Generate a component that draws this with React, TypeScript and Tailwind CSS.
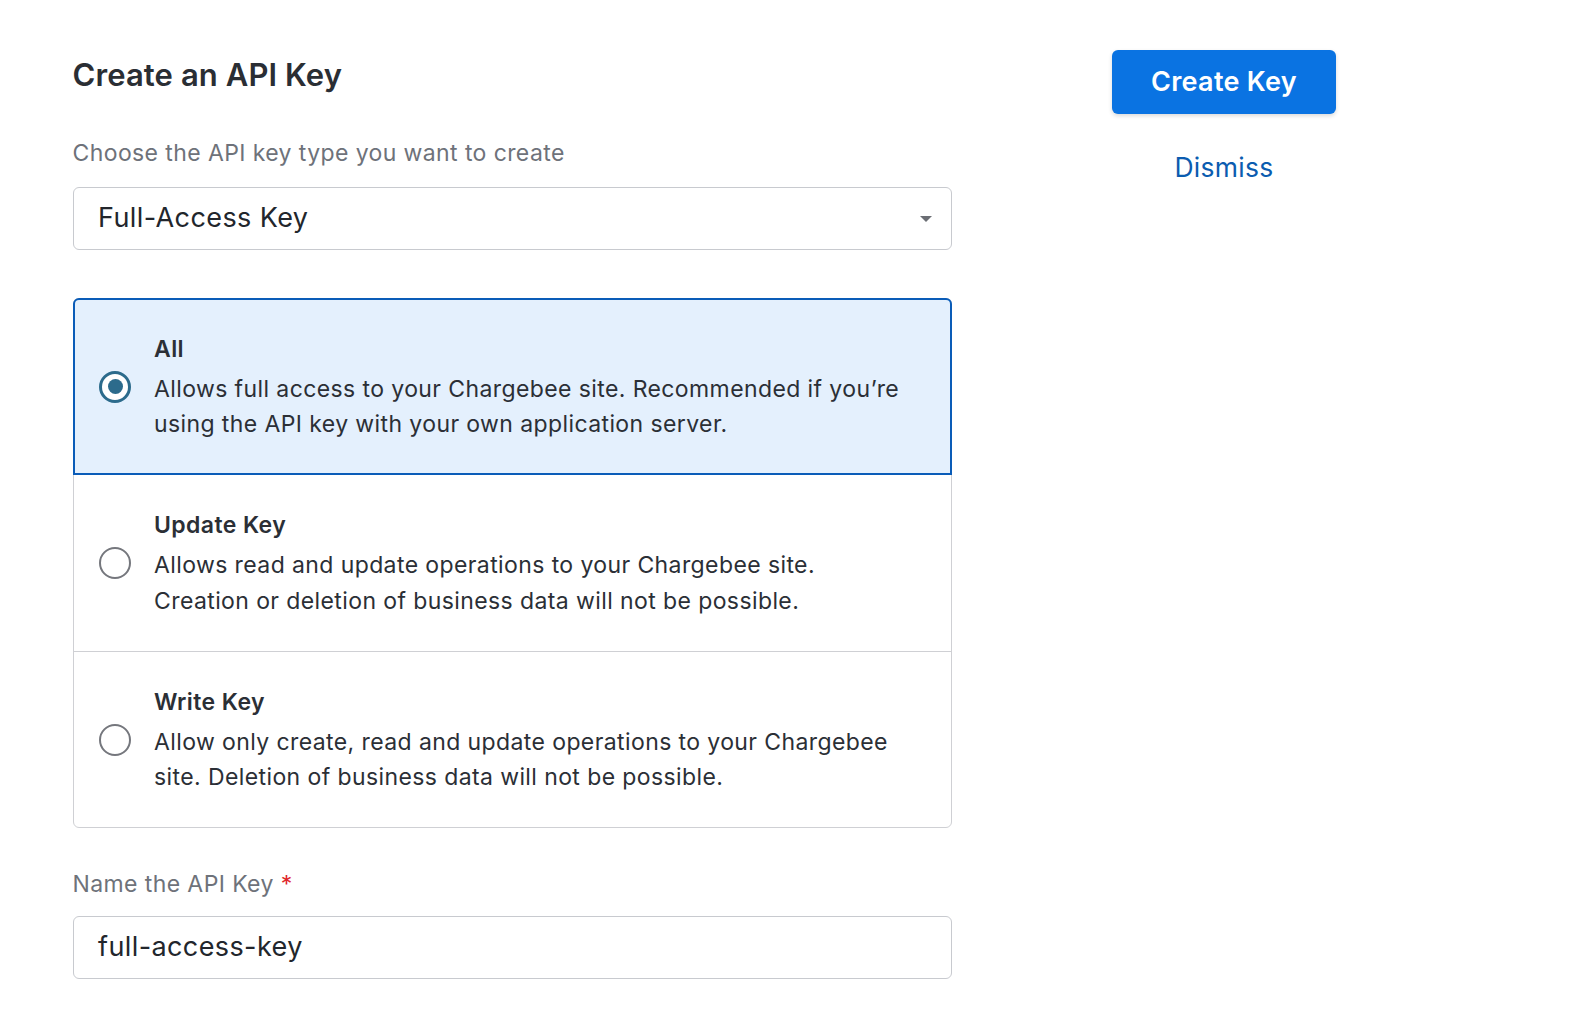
type KeyOption = {
  title: string
  lines: string[]
  selected?: boolean
}

const options: KeyOption[] = [
  {
    title: 'All',
    lines: [
      'Allows full access to your Chargebee site. Recommended if you’re',
      'using the API key with your own application server.',
    ],
    selected: true,
  },
  {
    title: 'Update Key',
    lines: [
      'Allows read and update operations to your Chargebee site.',
      'Creation or deletion of business data will not be possible.',
    ],
  },
  {
    title: 'Write Key',
    lines: [
      'Allow only create, read and update operations to your Chargebee',
      'site. Deletion of business data will not be possible.',
    ],
  },
]

function Radio({ checked }: { checked?: boolean }) {
  return checked ? (
    <div className="flex h-[32px] w-[32px] shrink-0 items-center justify-center rounded-full border-[3px] border-[#2c6b8c] bg-white">
      <div className="h-[15px] w-[15px] rounded-full bg-[#2c6b8c]" />
    </div>
  ) : (
    <div className="h-[32px] w-[32px] shrink-0 rounded-full border-2 border-[#75777d] bg-white" />
  )
}

function OptionText({ option }: { option: KeyOption }) {
  return (
    <div className="text-[23px] tracking-[0.4px] text-[#2b2f36]">
      <div className="mb-[5px] font-semibold leading-[36px]">{option.title}</div>
      {option.lines.map((line) => (
        <div key={line} className="leading-[35.5px]">
          {line}
        </div>
      ))}
    </div>
  )
}

function OptionRow({ option, index }: { option: KeyOption; index: number }) {
  if (option.selected) {
    return (
      <div className="relative -mx-px -mt-px flex h-[177px] items-center gap-[23px] rounded-t-[6px] border-2 border-[#0a5cb8] bg-[#e4f0fd] pl-[24.5px] pr-[20px]">
        <Radio checked />
        <OptionText option={option} />
      </div>
    )
  }
  return (
    <div
      className={`flex items-center gap-[23px] pl-[25.5px] pr-[20px] ${
        index === 2 ? 'h-[176px] border-t border-[#cfd0d4]' : 'h-[176px]'
      }`}
    >
      <Radio />
      <OptionText option={option} />
    </div>
  )
}

export default function App() {
  return (
    <div
      className="flex min-h-[1020px] w-full items-start bg-white pl-[72.5px] pt-[50px]"
      style={{ fontFamily: 'Inter, "Noto Sans", sans-serif' }}
    >
      <div className="mt-[6.5px] w-[879px]">
        <h1 className="text-[31px] font-semibold leading-[36px] tracking-[0.1px] text-[#2a2e34]">
          Create an API Key
        </h1>

        <div className="mt-[45.5px] text-[23px] leading-[30px] tracking-[0.4px] text-[#6e727a]">
          Choose the API key type you want to create
        </div>
        <div className="mt-[19px] flex h-[63px] items-center justify-between rounded-[6px] border border-[#c8cacf] bg-white pl-[24.5px] pr-[19px]">
          <span className="text-[27px] tracking-[0.4px] text-[#22262c]">Full-Access Key</span>
          <div className="h-0 w-0 border-x-[6px] border-t-[6px] border-x-transparent border-t-[#6b6e74]" />
        </div>

        <div className="mt-[48px] rounded-[6px] border border-[#cfd0d4]">
          {options.map((option, i) => (
            <OptionRow key={option.title} option={option} index={i} />
          ))}
        </div>

        <div className="mt-[41px] text-[23px] leading-[30px] tracking-[0.4px] text-[#6e727a]">
          Name the API Key <span className="text-[#e0262b]">*</span>
        </div>
        <div className="mt-[16.5px] flex h-[63px] items-center rounded-[6px] border border-[#c8cacf] bg-white pl-[24.5px]">
          <span className="text-[27px] tracking-[0.4px] text-[#22262c]">full-access-key</span>
        </div>
      </div>

      <div className="ml-[160.5px] flex w-[224px] flex-col items-center">
        <button
          type="button"
          className="flex h-[64px] w-[224px] items-center justify-center rounded-[6px] bg-[#0a73e2] text-[27px] font-semibold tracking-[0.3px] text-white shadow-[0_2px_4px_rgba(0,0,0,0.15)]"
        >
          Create Key
        </button>
        <button type="button" className="mt-[38px] text-[26.5px] leading-[30px] tracking-[0.3px] text-[#0b5cb0]">
          Dismiss
        </button>
      </div>
    </div>
  )
}
